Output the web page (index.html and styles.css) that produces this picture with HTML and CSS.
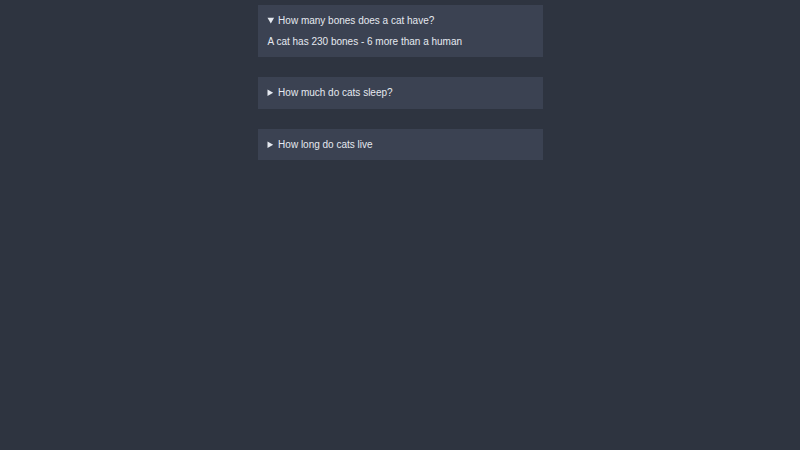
FILE: index.html
```html
<!DOCTYPE html>
<html lang="en">
<head>
<meta charset="utf-8">
<title>Cat FAQ</title>
<link rel="stylesheet" href="styles.css">
</head>
<body>
<main class="faq">
  <details class="item" open>
    <summary class="question">How many bones does a cat have?</summary>
    <p class="answer">A cat has 230 bones - 6 more than a human</p>
  </details>
  <details class="item">
    <summary class="question">How much do cats sleep?</summary>
    <p class="answer">Cats sleep for around 13 to 16 hours a day</p>
  </details>
  <details class="item">
    <summary class="question">How long do cats live</summary>
    <p class="answer">Cats live around 12 to 15 years</p>
  </details>
</main>
</body>
</html>
```
FILE: styles.css
```css
html, body {
  margin: 0;
  padding: 0;
  background: #2e3440;
  color: #e5e9f0;
  font-family: "Liberation Sans", Arial, sans-serif;
  font-size: 10px;
}
body {
  padding-top: 5px;
}
.faq {
  width: 285px;
  margin: 0 auto;
  display: flex;
  flex-direction: column;
  gap: 20px;
}
.item {
  background: #3b4252;
  padding: 10px;
}
.question {
  cursor: pointer;
  line-height: 11.5px;
}
.answer {
  margin: 9px 0 0;
  line-height: 11.5px;
}
```
